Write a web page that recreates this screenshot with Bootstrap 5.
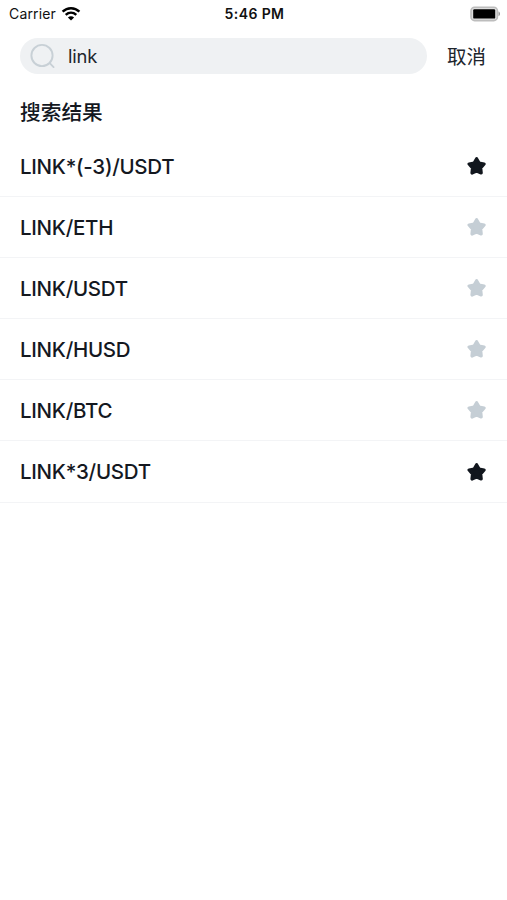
<!DOCTYPE html>
<html lang="zh-CN">
<head>
<meta charset="utf-8">
<meta name="viewport" content="width=device-width, initial-scale=1">
<title>搜索</title>
<link href="https://cdn.jsdelivr.net/npm/bootstrap@5.3.0/dist/css/bootstrap.min.css" rel="stylesheet">
<style>
body{font-family:Inter,"Noto Sans CJK SC",sans-serif;color:#14181f;overflow:hidden}
.status-bar{height:28px;padding:0 6px 0 9px;font-size:14px;line-height:28px;color:#111}
.status-side{flex:1 1 0}
.carrier{letter-spacing:.15px}
.clock{font-size:14px;font-weight:600;letter-spacing:.4px;margin-right:1px}
.search-bar{height:46px;padding:10px 21px 0 20px}
.search-field{width:407px;height:36px;background:#eff1f3;padding-left:10px}
.search-input{font-size:18.4px;line-height:36px;margin-left:13px;letter-spacing:-.2px;color:#20252c}
.cancel{font-size:19.5px;line-height:38px;color:#20252c}
.results-title{font-size:20.7px;font-weight:500;line-height:30px;margin:0;padding:24px 20px 8px;height:62px}
.pair-row{height:61.1px;padding:0 20.5px 0 20px;border-bottom:1px solid #f3f4f6}
.pair-name{font-size:20.5px;font-weight:500;line-height:30px;letter-spacing:-.28px;padding-top:1.5px}
.star-on{color:#11161d}
.star-off{color:#c5ced5}
</style>
</head>
<body class="bg-white">
<svg width="0" height="0" class="d-none">
<symbol id="star" viewBox="0 0 20 20"><path d="M9.6 2.7 12.1 7 17.1 8 13.7 11.9 14.2 17 9.6 15.1 5 17 5.5 11.9 2.1 8 7.1 7Z" fill="currentColor" stroke="currentColor" stroke-width="3.2" stroke-linejoin="round"/></symbol>
</svg>
<header>
<div class="status-bar d-flex align-items-center">
<div class="status-side d-flex align-items-center"><span class="carrier">Carrier</span>
<svg class="ms-1" width="22" height="16" viewBox="-1 1 22 16" fill="none" stroke="#000" stroke-width="2.4"><path d="M1.6 6.7C6.4 2 13.6 2 18.4 6.7M4.7 9.9C7.8 7.1 12.2 7.1 15.3 9.9"/><path d="M6.9 12.4C8.7 10.7 11.3 10.7 13.1 12.4L10 15.6Z" fill="#000" stroke="none"/></svg></div>
<span class="clock">5:46 PM</span>
<div class="status-side d-flex justify-content-end"><svg width="32" height="16" viewBox="0 0 32 16"><rect x="2" y="1.2" width="26.4" height="13.4" rx="3.6" fill="#ddd" stroke="#bdbdbd" stroke-width="1.6"/><rect x="4.2" y="3.2" width="22" height="9.4" rx="1.2" fill="#000"/><path d="M29.5 5.5C31.5 6.2 31.5 9.4 29.5 10.1Z" fill="#999"/></svg></div>
</div>
<div class="search-bar d-flex justify-content-between">
<div class="search-field rounded-pill d-flex align-items-center">
<svg width="25" height="26" viewBox="0 0 25 26" fill="none" stroke="#c8d0d6" stroke-width="1.9" stroke-linecap="round"><circle cx="12" cy="12.5" r="10.6"/><path d="M19.7 20.2 23.6 24.1"/></svg>
<span class="search-input">link</span>
</div>
<span class="cancel">取消</span>
</div>
</header>
<main>
<h1 class="results-title">搜索结果</h1>
<ul class="list-unstyled mb-0">
<li class="pair-row d-flex align-items-center justify-content-between"><span class="pair-name">LINK*(-3)/USDT</span><svg class="star-on" width="20" height="20"><use href="#star"/></svg></li>
<li class="pair-row d-flex align-items-center justify-content-between"><span class="pair-name">LINK/ETH</span><svg class="star-off" width="20" height="20"><use href="#star"/></svg></li>
<li class="pair-row d-flex align-items-center justify-content-between"><span class="pair-name">LINK/USDT</span><svg class="star-off" width="20" height="20"><use href="#star"/></svg></li>
<li class="pair-row d-flex align-items-center justify-content-between"><span class="pair-name">LINK/HUSD</span><svg class="star-off" width="20" height="20"><use href="#star"/></svg></li>
<li class="pair-row d-flex align-items-center justify-content-between"><span class="pair-name">LINK/BTC</span><svg class="star-off" width="20" height="20"><use href="#star"/></svg></li>
<li class="pair-row d-flex align-items-center justify-content-between"><span class="pair-name">LINK*3/USDT</span><svg class="star-on" width="20" height="20"><use href="#star"/></svg></li>
</ul>
</main>
<script src="https://cdn.jsdelivr.net/npm/bootstrap@5.3.0/dist/js/bootstrap.bundle.min.js"></script>
</body>
</html>
